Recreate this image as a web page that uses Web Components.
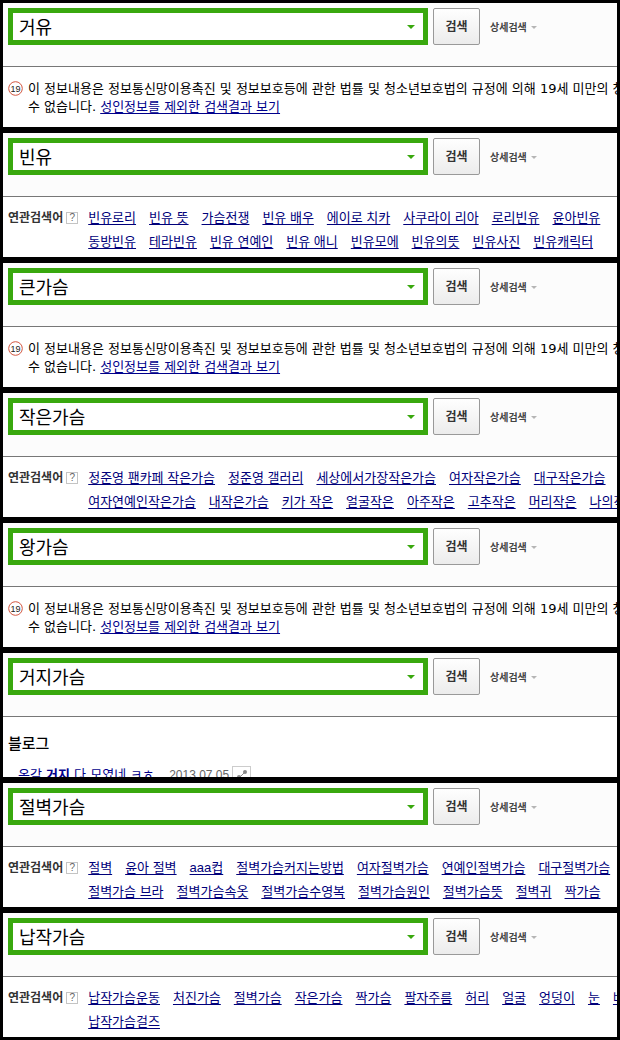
<!DOCTYPE html>
<html lang="ko">
<head>
<meta charset="utf-8">
<meta name="viewport" content="width=device-width, initial-scale=1">
<title>검색</title>
<style>
body {
  margin: 0;
  background: #000;
  color: #000;
  font: 13px/18px "Liberation Sans", "Noto Sans CJK KR", sans-serif;
}
</style>
</head>
<body>
<result-stack>
  <search-panel query="거유"><adult-notice></adult-notice></search-panel>
  <search-panel query="빈유"><related-terms>
    <term-row terms="빈유로리|빈유 뜻|가슴전쟁|빈유 배우|에이로 치카|사쿠라이 리아|로리빈유|윤아빈유"></term-row>
    <term-row terms="동방빈유|테라빈유|빈유 연예인|빈유 애니|빈유모에|빈유의뜻|빈유사진|빈유캐릭터"></term-row>
  </related-terms></search-panel>
  <search-panel query="큰가슴"><adult-notice></adult-notice></search-panel>
  <search-panel query="작은가슴"><related-terms>
    <term-row terms="정준영 팬카페 작은가슴|정준영 갤러리|세상에서가장작은가슴|여자작은가슴|대구작은가슴"></term-row>
    <term-row terms="여자연예인작은가슴|내작은가슴|키가 작은|얼굴작은|아주작은|고추작은|머리작은|나의작"></term-row>
  </related-terms></search-panel>
  <search-panel query="왕가슴"><adult-notice></adult-notice></search-panel>
  <search-panel query="거지가슴"><blog-section></blog-section></search-panel>
  <search-panel query="절벽가슴"><related-terms>
    <term-row terms="절벽|윤아 절벽|aaa컵|절벽가슴커지는방법|여자절벽가슴|연예인절벽가슴|대구절벽가슴"></term-row>
    <term-row terms="절벽가슴 브라|절벽가슴속옷|절벽가슴수영복|절벽가슴원인|절벽가슴뜻|절벽귀|짝가슴"></term-row>
  </related-terms></search-panel>
  <search-panel query="납작가슴"><related-terms>
    <term-row terms="납작가슴운동|처진가슴|절벽가슴|작은가슴|짝가슴|팔자주름|허리|얼굴|엉덩이|눈|배"></term-row>
    <term-row terms="납작가슴걸즈"></term-row>
  </related-terms></search-panel>
</result-stack>

<script>
class Base extends HTMLElement {
  render(html) {
    this.attachShadow({ mode: "open" }).innerHTML = html;
  }
}

customElements.define("result-stack", class extends Base {
  connectedCallback() {
    this.render(`
      <style>:host { display: grid; grid-template-columns: minmax(0, 1fr); gap: 6px; padding: 3px; }</style>
      <slot></slot>`);
  }
});

customElements.define("search-panel", class extends Base {
  connectedCallback() {
    this.render(`
      <style>
        :host { display: block; background: #fff; overflow: hidden; }
        form {
          display: flex; align-items: flex-start; box-sizing: border-box;
          height: 64px; padding: 5px; background: #fcfcfc; border-bottom: 1px solid #777;
        }
        .box {
          display: flex; align-items: center; box-sizing: border-box;
          flex: 0 1 420px; min-width: 0; height: 37px; padding: 0 8px 0 6px;
          border: 5px solid #39a80e; background: #fff;
        }
        input {
          flex: 1; min-width: 0; padding: 2px 0 0; border: 0; outline: 0; background: none; color: #000;
          font: 400 18px/24px "Liberation Sans", "Noto Sans CJK KR", sans-serif;
        }
        button {
          flex: none; box-sizing: border-box; width: 47px; height: 37px; margin: 0 10px 0 5px; padding: 0;
          border: 1px solid #999; border-radius: 2px;
          background: linear-gradient(#fefefe, #ececec); color: #333;
          font: bold 12px/18px "Liberation Sans", "Noto Sans CJK KR", sans-serif;
        }
        a {
          display: flex; align-items: center; gap: 4px; flex: none; height: 39px;
          color: #444; text-decoration: none; font-size: 10px; font-weight: bold;
        }
        svg { display: block; flex: none; }
      </style>
      <form onsubmit="return false">
        <div class="box">
          <input type="text" aria-label="검색어">
          <svg width="8" height="4" viewBox="0 0 8 4"><path d="M0 0h8L4 4z" fill="#39a80e"/></svg>
        </div>
        <button type="submit">검색</button>
        <a href="#">상세검색<svg width="6" height="3" viewBox="0 0 6 3"><path d="M0 0h6L3 3z" fill="#b5b5b5"/></svg></a>
      </form>
      <slot></slot>`);
    this.shadowRoot.querySelector("input").value = this.getAttribute("query");
  }
});

customElements.define("adult-notice", class extends Base {
  connectedCallback() {
    this.render(`
      <style>
        :host { display: flex; gap: 5px; padding: 13px 0 11px 5px; white-space: nowrap; overflow: hidden; }
        svg { flex: none; margin-top: 1px; }
        p { margin: 0; font-family: "DejaVu Sans", "Noto Sans CJK KR", sans-serif; }
        a { color: #00008b; text-underline-offset: 2px; }
        text { font: 9px "Liberation Sans", sans-serif; }
      </style>
      <svg width="15" height="15" viewBox="0 0 15 15">
        <circle cx="7.5" cy="7.5" r="6.8" fill="#fff" stroke="#d2553f"/>
        <text x="7.5" y="11" text-anchor="middle" fill="#222">19</text>
      </svg>
      <p>이 정보내용은 정보통신망이용촉진 및 정보보호등에 관한 법률 및 청소년보호법의 규정에 의해 19세 미만의 청<br>수 없습니다. <a href="#">성인정보를 제외한 검색결과 보기</a></p>`);
  }
});

customElements.define("related-terms", class extends Base {
  connectedCallback() {
    this.render(`
      <style>
        :host { display: flex; gap: 10px; padding: 9px 0 3px 5px; line-height: 24px; }
        .label { display: flex; align-items: center; gap: 3px; flex: none; height: 24px; }
        h2 { margin: 0; color: #333; font-size: 12px; font-weight: bold; line-height: 24px; }
        button {
          box-sizing: border-box; width: 12px; height: 12px; padding: 0; border: 1px solid #c4c4c4;
          background: #fff; color: #666; font: 10px/10px "Liberation Sans", sans-serif;
        }
        .rows { flex: 1; min-width: 0; }
      </style>
      <div class="label"><h2>연관검색어</h2><button type="button" aria-label="도움말">?</button></div>
      <div class="rows"><slot></slot></div>`);
  }
});

customElements.define("term-row", class extends Base {
  connectedCallback() {
    this.render(`
      <style>
        :host { display: flex; gap: 13px; overflow: hidden; white-space: nowrap; height: 24px; }
        a { flex: none; color: #00007a; text-underline-offset: 2px; }
      </style>
      ${this.getAttribute("terms").split("|").map(t => `<a href="#">${t}</a>`).join("")}`);
  }
});

customElements.define("blog-section", class extends Base {
  connectedCallback() {
    this.render(`
      <style>
        :host { display: block; box-sizing: border-box; max-height: 60px; overflow: hidden; padding: 17px 5px 0; }
        h2 { margin: 0; font-size: 15px; font-weight: 500; line-height: 20px; }
        .post { display: flex; align-items: center; height: 20px; margin-top: 11px; padding-left: 10px; white-space: nowrap; }
        .post > a { color: #00008b; text-underline-offset: 2px; font-family: "DejaVu Sans", "Noto Sans CJK KR", sans-serif; }
        time { margin: 0 3px 0 15px; color: #666; font-size: 12px; }
        button { display: grid; place-items: center; box-sizing: border-box; width: 19px; height: 19px; padding: 0; border: 1px solid #ccc; background: #fff; }
      </style>
      <h2>블로그</h2>
      <div class="post">
        <a href="#">온갖 <b>거지</b> 다 모였네 ㅋㅎ</a>
        <time datetime="2013-07-05">2013.07.05</time>
        <button type="button" aria-label="공유"><svg width="11" height="11" viewBox="0 0 11 11"><path d="M2 9 9 2" stroke="#888"/><circle cx="9" cy="2" r="2" fill="#888"/><circle cx="3" cy="7" r="2" fill="#888"/></svg></button>
      </div>`);
  }
});
</script>
</body>
</html>
